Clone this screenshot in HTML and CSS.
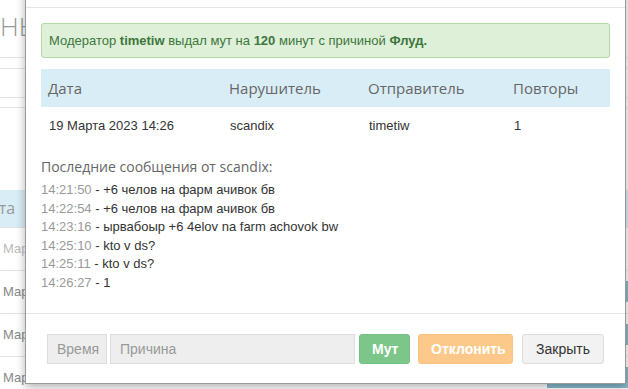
FILE: index.html
```html
<!DOCTYPE html>
<html lang="ru">
<head>
    <meta charset="UTF-8">
    <meta name="viewport" content="width=device-width, initial-scale=1.0">
    <title>Жалобы</title>
    <link rel="stylesheet" href="styles.css">
</head>
<body>
    <div class="page">
        <h1 class="page-title">НЫЕ ЖАЛОБЫ</h1>
        <div class="page-rule rule-a"></div>
        <div class="page-rule rule-b"></div>
        <div class="page-rule rule-c"></div>
        <div class="page-rule rule-d"></div>

        <table class="page-table">
            <thead>
                <tr><th class="col-date">Дата</th><th>Нарушитель</th><th>Статус</th></tr>
            </thead>
            <tbody>
                <tr class="faded"><td>19 Марта 2023 14:26</td><td>scandix</td><td></td></tr>
                <tr><td>19 Марта 2023 14:20</td><td>kelvin</td><td><span class="tag">ок</span></td></tr>
                <tr><td>19 Марта 2023 14:11</td><td>max_r</td><td><span class="tag">ок</span></td></tr>
                <tr><td>19 Марта 2023 14:02</td><td>nord</td><td><span class="tag">ок</span></td></tr>
            </tbody>
        </table>
    </div>

    <div class="modal">
        <div class="modal-header"></div>

        <div class="modal-body">
            <div class="alert">
                Модератор <b>timetiw</b> выдал мут на <b>120</b> минут с причиной <b>Флуд.</b>
            </div>

            <table class="report">
                <thead>
                    <tr>
                        <th class="c1">Дата</th>
                        <th class="c2">Нарушитель</th>
                        <th class="c3">Отправитель</th>
                        <th>Повторы</th>
                    </tr>
                </thead>
                <tbody>
                    <tr>
                        <td>19 Марта 2023 14:26</td>
                        <td>scandix</td>
                        <td>timetiw</td>
                        <td>1</td>
                    </tr>
                </tbody>
            </table>

            <div class="messages-title">Последние сообщения от scandix:</div>
            <div class="messages">
                <div><span class="time">14:21:50</span> - +6 челов на фарм ачивок бв</div>
                <div><span class="time">14:22:54</span> - +6 челов на фарм ачивок бв</div>
                <div><span class="time">14:23:16</span> - ырвабоыр +6 4elov na farm achovok bw</div>
                <div><span class="time">14:25:10</span> - kto v ds?</div>
                <div><span class="time">14:25:11</span> - kto v ds?</div>
                <div><span class="time">14:26:27</span> - 1</div>
            </div>
        </div>

        <div class="modal-footer">
            <input class="field field-time" type="text" placeholder="Время" disabled>
            <input class="field field-reason" type="text" placeholder="Причина" disabled>
            <button class="btn btn-mute" disabled>Мут</button>
            <button class="btn btn-decline" disabled>Отклонить</button>
            <button class="btn btn-close">Закрыть</button>
        </div>
    </div>
</body>
</html>
```

FILE: styles.css
```css
* {
    margin: 0;
    padding: 0;
    box-sizing: border-box;
}

body {
    font-family: "Liberation Sans", Arial, sans-serif;
    font-size: 13px;
    color: #333;
    background: #fff;
    overflow: hidden;
    height: 389px;
}

/* фоновая страница */
.page {
    padding-top: 10px;
}

.page-title {
    font-family: "Open Sans", sans-serif;
    font-size: 26px;
    font-weight: 300;
    line-height: 32px;
    color: #999;
    white-space: nowrap;
    height: 47px;
}

.page-rule {
    border-top: 1px solid #e3e3e3;
}

.rule-a { height: 11px; }
.rule-b { height: 29px; }
.rule-c { height: 10px; }
.rule-d { height: 83px; }

.page-table {
    border-collapse: collapse;
    margin-left: -28px;
    width: 678px;
}

.page-table th {
    background: #d9edf7;
    font-family: "Open Sans", sans-serif;
    font-weight: 400;
    font-size: 16px;
    color: #999;
    text-align: left;
    height: 37px;
    padding: 0 7px;
}

.page-table td {
    height: 43px;
    padding: 0 7px;
    border-top: 1px solid #e3e3e3;
    color: #888;
    white-space: nowrap;
}

.page-table td:first-child {
    padding-left: 13px;
}

.page-table .faded td {
    color: #bbb;
}

.page-table td:last-child {
    text-align: right;
    padding-right: 10px;
}

.tag {
    display: inline-block;
    background: #86b9cb;
    color: #fff;
    padding: 3px 40px;
}

/* модальное окно */
.modal {
    position: absolute;
    left: 25px;
    top: -40px;
    width: 601px;
    background: #fff;
    border: 1px solid #9a9a9a;
    border-top: none;
    box-shadow: 0 3px 9px rgba(0, 0, 0, 0.3);
}

.modal-header {
    height: 48px;
    border-bottom: 1px solid #e5e5e5;
}

.modal-body {
    padding: 15px 15px 15px;
}

.alert {
    background: #dff0d8;
    border: 1px solid #b2dba1;
    border-radius: 3px;
    color: #3c763d;
    padding: 9px 7px;
    line-height: 15px;
    margin-bottom: 11px;
}

.alert b {
    font-weight: 700;
}

.report {
    width: 100%;
    border-collapse: collapse;
}

.report th {
    background: #d9edf7;
    font-family: "Open Sans", sans-serif;
    font-weight: 400;
    font-size: 15px;
    line-height: 22px;
    color: #666;
    text-align: left;
    padding: 8px 7px;
}

.report .c1 { width: 181px; }
.report .c2 { width: 139px; }
.report .c3 { width: 145px; }

.report td {
    padding: 10px 8px;
    line-height: 17px;
}

.messages-title {
    font-family: "Open Sans", sans-serif;
    font-size: 14px;
    line-height: 20px;
    color: #666;
    margin-top: 13px;
    margin-bottom: 4px;
}

.messages {
    line-height: 18.5px;
    margin-bottom: 6px;
}

.time {
    color: #999;
}

.modal-footer {
    border-top: 1px solid #e5e5e5;
    padding: 20px 20px 19px 21px;
    display: flex;
    align-items: center;
}

.field {
    height: 30px;
    border: 1px solid #ddd;
    background: #eee;
    font-family: "Liberation Sans", Arial, sans-serif;
    font-size: 14px;
    padding: 0 9px;
    color: #555;
}

.field::placeholder {
    color: #999;
}

.field-time {
    width: 60px;
    padding-right: 0;
    margin-right: 3px;
}

.field-reason {
    width: 245px;
    margin-right: 4px;
}

.btn {
    height: 30px;
    border: 1px solid transparent;
    border-radius: 3px;
    font-family: "Liberation Sans", Arial, sans-serif;
    font-size: 14px;
    padding: 0 12px;
}

.btn-mute {
    width: 51px;
    background: #7cc68a;
    border-color: #74c082;
    color: #fff;
    font-weight: 700;
    margin-right: 8px;
}

.btn-decline {
    width: 95px;
    background: #fdc98a;
    border-color: #f8c282;
    color: #fff;
    font-weight: 700;
    margin-right: 9px;
}

.btn-close {
    width: 82px;
    background: #f2f2f2;
    border-color: #ddd;
    color: #333;
}
```
